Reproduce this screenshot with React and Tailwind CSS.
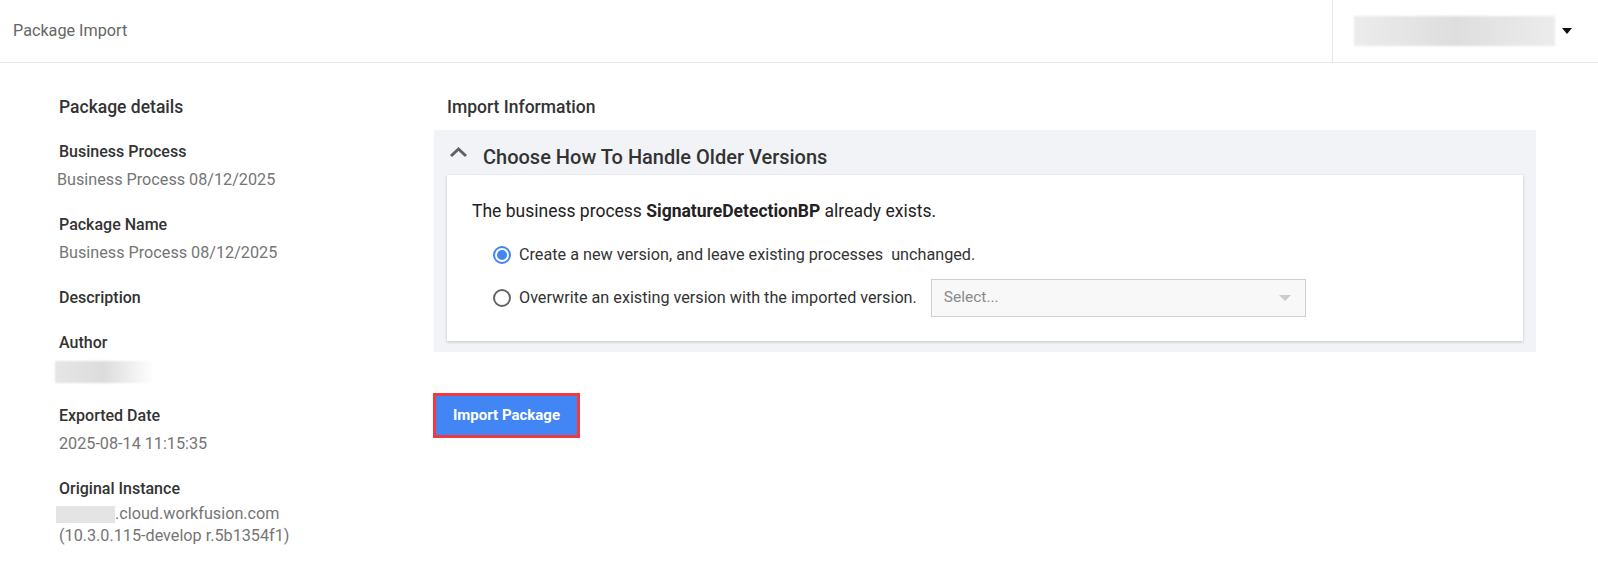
import React from "react";

const details = [
  { label: "Business Process", value: "Business Process 08/12/2025", shift: true },
  { label: "Package Name", value: "Business Process 08/12/2025" },
  { label: "Description" },
  { label: "Author", hidden: true },
  { label: "Exported Date", value: "2025-08-14 11:15:35" },
];

const Radio = ({ checked }) => (
  <span
    className={
      "flex h-[18px] w-[18px] shrink-0 items-center justify-center rounded-full border-2 " +
      (checked ? "border-[#4285f4]" : "border-[#666]")
    }
  >
    {checked && <span className="h-[10px] w-[10px] rounded-full bg-[#4285f4]" />}
  </span>
);

const App = () => {
  return (
    <div className="min-h-[561px] bg-white text-[#333] font-['Roboto','Liberation_Sans',sans-serif]">
      {/* Top bar */}
      <div className="flex h-[63px] items-center justify-between border-b border-[#e6e6e6]">
        <span className="pl-[13px] text-[16.2px] text-[#666]">Package Import</span>
        <div className="flex h-full w-[266px] items-center border-l border-[#e6e6e6] pl-[21px]">
          <div className="h-[30px] w-[201px] bg-gradient-to-r from-[#ececec] via-[#dedede] to-[#ececec] blur-[1px]" />
          <span className="ml-[7px] h-0 w-0 border-x-[5px] border-t-[6px] border-x-transparent border-t-[#111]" />
        </div>
      </div>

      <div className="flex">
        {/* Package details */}
        <div className="w-[434px] shrink-0 pl-[59px] pt-[32px]">
          <h2 className="text-[17.5px] leading-6 font-medium text-[#333]">Package details</h2>
          <div className="mt-[21px] flex flex-col">
            {details.map((d) => (
              <div key={d.label} className="mb-[21px]">
                <div className="text-[16px] leading-6 font-medium text-[#333]">{d.label}</div>
                {d.value && (
                  <div className={"mt-[4px] text-[16.2px] leading-6 text-[#757575] " + (d.shift ? "-ml-[2px]" : "")}>
                    {d.value}
                  </div>
                )}
                {d.hidden && (
                  <div className="mt-[6px] -ml-[4px] h-[22px] w-[98px] bg-gradient-to-r from-[#e6e6e6] via-[#dcdcdc] to-white blur-[1px]" />
                )}
              </div>
            ))}
            <div>
              <div className="text-[16px] leading-6 font-medium text-[#333]">Original Instance</div>
              <div className="mt-[2px] flex items-center text-[16.2px] leading-[22px] text-[#757575]">
                <span className="-ml-[3px] h-[17px] w-[59px] bg-[#e4e4e4]" />
                <span>.cloud.workfusion.com</span>
              </div>
              <div className="text-[16.2px] leading-[22px] text-[#757575]">(10.3.0.115-develop r.5b1354f1)</div>
            </div>
          </div>
        </div>

        {/* Import information */}
        <div className="mr-[62px] flex-1 pt-[32px]">
          <h2 className="pl-[13px] text-[17.5px] leading-6 font-medium text-[#333]">Import Information</h2>
          <div className="mt-[11px] bg-[#f2f3f6] pb-[11px]">
            <div className="flex h-[45px] items-center pl-[15px]">
              <svg width="19" height="12" viewBox="0 0 19 12" className="mb-[2px]">
                <path d="M2 10 L9.5 3 L17 10" fill="none" stroke="#616161" strokeWidth="3" />
              </svg>
              <span className="ml-[15px] mt-[8px] text-[20px] font-medium text-[#333]">
                Choose How To Handle Older Versions
              </span>
            </div>
            <div className="mx-[13px] bg-white pl-[25px] pt-[24px] pb-[24px] shadow-[0_1px_3px_rgba(0,0,0,0.2)]">
              <p className="text-[17.5px] leading-6 text-[#222]">
                The business process <span className="font-bold">SignatureDetectionBP</span> already exists.
              </p>
              <div className="mt-[20px] flex items-center pl-[21px]">
                <Radio checked />
                <span className="ml-[8px] text-[16.2px] leading-6 text-[#333]">
                  Create a new version, and leave existing processes&nbsp; unchanged.
                </span>
              </div>
              <div className="mt-[12px] flex items-center pl-[21px]">
                <Radio />
                <span className="ml-[8px] text-[16.2px] leading-6 text-[#333]">
                  Overwrite an existing version with the imported version.
                </span>
                <div className="ml-[14px] flex h-[38px] w-[375px] items-center justify-between border border-[#cfcfcf] bg-[#f8f8f8] pl-[12px] pr-[14px]">
                  <span className="text-[15.5px] text-[#8a8a8a]">Select...</span>
                  <span className="h-0 w-0 border-x-[6px] border-t-[6px] border-x-transparent border-t-[#cccccc]" />
                </div>
              </div>
            </div>
          </div>

          <button className="mt-[41px] -ml-[1px] h-[45px] w-[147px] border-[3px] border-[#ef3b40] bg-[#4285f4] text-[15px] font-bold text-white">
            Import Package
          </button>
        </div>
      </div>
    </div>
  );
};

export default App;
